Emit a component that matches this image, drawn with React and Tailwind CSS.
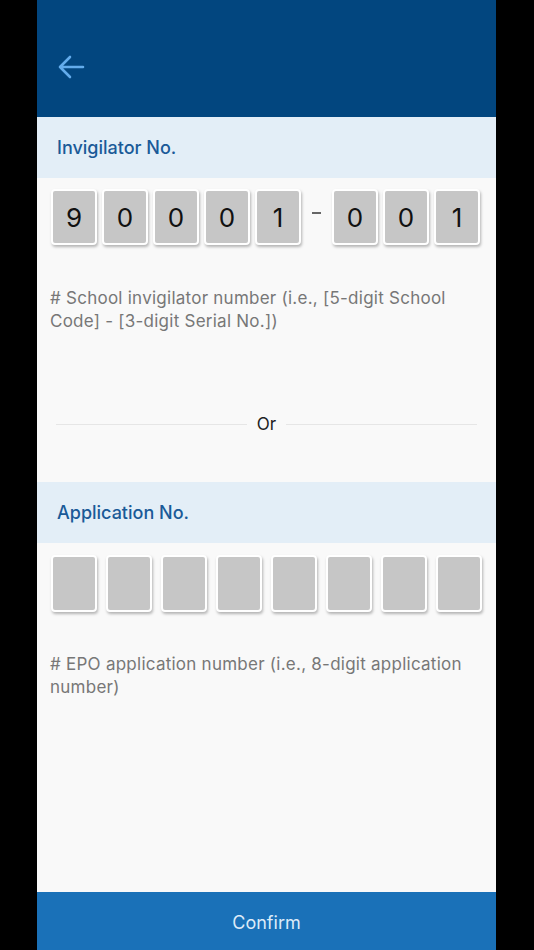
import React from "react";

const font = { fontFamily: "Inter, 'Noto Sans', sans-serif" };

function Box({ children, h = "h-[56px]" }) {
  return (
    <div
      className={`w-[46px] ${h} rounded-[4px] border-2 border-white bg-[#c6c6c6] shadow-[1px_2px_3px_rgba(0,0,0,0.28)] flex items-center justify-center text-[26px] text-[#111]`}
    >
      {children}
    </div>
  );
}

export default function App() {
  return (
    <div className="w-[534px] h-[950px] bg-black pl-[37px]" style={font}>
      <div className="w-[459px] h-full bg-[#f9f9f9] flex flex-col">
        <div className="h-[117px] bg-[#02467f] flex items-center pl-[20px] pt-[16px] shrink-0">
          <svg width="28" height="24" viewBox="0 0 28 24" fill="none">
            <path
              d="M26 12H3M13 2L3 12l10 10"
              stroke="#63acec"
              strokeWidth="2.6"
              strokeLinecap="round"
              strokeLinejoin="round"
            />
          </svg>
        </div>

        <div className="h-[61px] bg-[#e3eef7] flex items-center pl-[20px] text-[18px] font-medium text-[#1a5a98] shrink-0">
          Invigilator No.
        </div>

        <div className="flex items-center pl-[14px] mt-[11px]">
          <div className="flex gap-[5px]">
            <Box>9</Box>
            <Box>0</Box>
            <Box>0</Box>
            <Box>0</Box>
            <Box>1</Box>
          </div>
          <div className="w-[31px] flex justify-center -mt-[8px]">
            <div className="w-[9px] h-[2px] bg-[#666]" />
          </div>
          <div className="flex gap-[5px]">
            <Box>0</Box>
            <Box>0</Box>
            <Box>1</Box>
          </div>
        </div>

        <p className="mt-[42px] pl-[13px] pr-[20px] text-[17px] leading-[23px] tracking-[0.25px] text-[#777]">
          # School invigilator number (i.e., [5-digit School Code] - [3-digit Serial No.])
        </p>

        <div className="mt-[79px] flex items-center px-[19px] gap-[10px]">
          <div className="flex-1 h-px bg-[#e6e6e6]" />
          <span className="text-[17px] text-[#222] leading-[24px]">Or</span>
          <div className="flex-1 h-px bg-[#e6e6e6]" />
        </div>

        <div className="mt-[46px] h-[61px] bg-[#e3eef7] flex items-center pl-[20px] text-[18px] font-medium text-[#1a5a98] shrink-0">
          Application No.
        </div>

        <div className="flex pl-[14px] gap-[9px] mt-[12px]">
          {[0, 1, 2, 3, 4, 5, 6, 7].map((i) => (
            <Box key={i} h="h-[57px]" />
          ))}
        </div>

        <p className="mt-[41px] pl-[13px] pr-[20px] text-[17px] leading-[23px] tracking-[0.25px] text-[#777]">
          # EPO application number (i.e., 8-digit application number)
        </p>

        <div className="flex-1" />

        <div className="h-[58px] bg-[#1a71b8] flex items-center justify-center text-[18px] text-[#dcebf8] shrink-0 pt-[2px]">
          Confirm
        </div>
      </div>
    </div>
  );
}
